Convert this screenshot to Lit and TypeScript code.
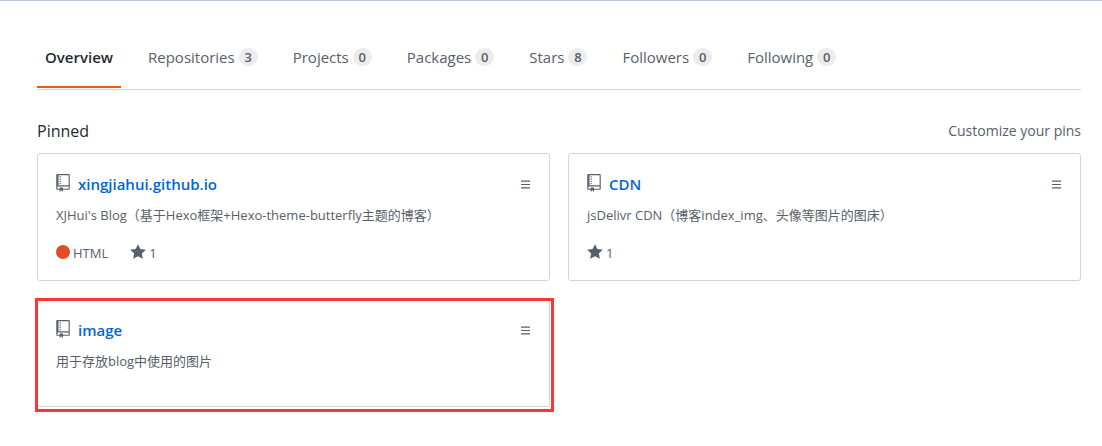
import { LitElement, html, css, svg, nothing } from "lit";
import { customElement, property } from "lit/decorators.js";

interface Tab {
  label: string;
  count?: number;
}

interface Repo {
  name: string;
  description: string;
  language?: string;
  stars?: number;
  highlighted?: boolean;
}

const TABS: Tab[] = [
  { label: "Overview" },
  { label: "Repositories", count: 3 },
  { label: "Projects", count: 0 },
  { label: "Packages", count: 0 },
  { label: "Stars", count: 8 },
  { label: "Followers", count: 0 },
  { label: "Following", count: 0 },
];

const REPOS: Repo[] = [
  {
    name: "xingjiahui.github.io",
    description: "XJHui's Blog（基于Hexo框架+Hexo-theme-butterfly主题的博客）",
    language: "HTML",
    stars: 1,
  },
  { name: "CDN", description: "jsDelivr CDN（博客index_img、头像等图片的图床）", stars: 1 },
  { name: "image", description: "用于存放blog中使用的图片", highlighted: true },
];

const repoPath = svg`<path fill-rule="evenodd" d="M4 9H3V8h1v1zm0-3H3v1h1V6zm0-2H3v1h1V4zm0-2H3v1h1V2zm8-1v12c0 .55-.45 1-1 1H6v2l-1.5-1.5L3 16v-2H1c-.55 0-1-.45-1-1V1c0-.55.45-1 1-1h10c.55 0 1 .45 1 1zm-1 10H1v2h2v-1h3v1h5v-2zm0-10H2v9h9V1z"/>`;
const starPath = svg`<path d="M14 6l-4.9-.64L7 1 4.9 5.36 0 6l3.6 3.26L2.67 14 7 11.67 11.33 14l-.93-4.74L14 6z"/>`;
const grabberPath = svg`<path d="M8 4v1H0V4h8zM0 8h8V7H0v1zm0 3h8v-1H0v1z"/>`;

@customElement("repo-card")
export class RepoCard extends LitElement {
  @property({ attribute: false }) repo!: Repo;

  static styles = css`
    :host {
      display: block;
      position: relative;
    }
    .card {
      box-sizing: border-box;
      height: 100%;
      padding: 18px 18px 17px;
      border: 1px solid #d1d5da;
      border-radius: 3px;
      display: flex;
      flex-direction: column;
      color: #586069;
    }
    .head {
      display: flex;
      align-items: center;
      height: 24px;
    }
    svg {
      display: block;
      fill: currentColor;
    }
    .icon {
      margin-bottom: 2px;
    }
    .name {
      flex: 1;
      margin-left: 8px;
      font-size: 15px;
      line-height: 24px;
      font-weight: 600;
      color: #0366d6;
      text-decoration: none;
    }
    .grab {
      border: 0;
      background: none;
      padding: 2px 1px 0 0;
      color: inherit;
      cursor: move;
    }
    .description {
      margin: 9px 0 18px;
      font-size: 13px;
      line-height: 20px;
    }
    .meta {
      display: flex;
      align-items: center;
      gap: 22px;
      font-size: 13px;
      line-height: 20px;
    }
    .item {
      display: flex;
      align-items: center;
      gap: 3px;
      color: inherit;
      text-decoration: none;
    }
    .dot {
      width: 14px;
      height: 14px;
      margin-bottom: 2px;
      border-radius: 50%;
      background: #e34c26;
    }
    .star {
      margin-bottom: 2px;
    }
    .outline {
      position: absolute;
      inset: -1px -4px -5px -2px;
      border: 3px solid #fd3535;
      pointer-events: none;
    }
  `;

  render() {
    const { name, description, language, stars, highlighted } = this.repo;
    return html`
      <article class="card">
        <div class="head">
          <svg class="icon" width="14" height="18" viewBox="0 0 12 16" aria-hidden="true">${repoPath}</svg>
          <a class="name" href="#${name}">${name}</a>
          <button class="grab" type="button" aria-label="Reorder ${name}">
            <svg width="9" height="18" viewBox="0 0 8 16" aria-hidden="true">${grabberPath}</svg>
          </button>
        </div>
        <p class="description">${description}</p>
        ${language || stars
          ? html`<div class="meta">
              ${language ? html`<span class="item"><span class="dot"></span>${language}</span>` : nothing}
              ${stars
                ? html`<a class="item" href="#stars">
                    <svg class="star" width="16" height="18" viewBox="0 0 14 16" aria-hidden="true">${starPath}</svg>${stars}
                  </a>`
                : nothing}
            </div>`
          : nothing}
      </article>
      ${highlighted ? html`<div class="outline"></div>` : nothing}
    `;
  }
}

@customElement("app-root")
export class AppRoot extends LitElement {
  static styles = css`
    :host {
      display: block;
      border-top: 1px solid #bccbdf;
      padding: 28px 21px 35px 37px;
      background: #fff;
      color: #24292e;
      font-family: "Segoe UI", "Open Sans", "Noto Sans CJK SC", sans-serif;
      font-size: 15px;
      line-height: 24px;
    }
    .tabs {
      display: flex;
      gap: 19px;
      border-bottom: 1px solid #d1d5da;
      margin-bottom: 29px;
    }
    .tab {
      display: flex;
      align-items: center;
      gap: 4px;
      padding: 16px 8px 17px;
      border-bottom: 2px solid transparent;
      margin-bottom: 1px;
      color: #586069;
      text-decoration: none;
      white-space: nowrap;
    }
    .tab.current {
      font-weight: 600;
      color: #24292e;
      border-color: #e36209;
    }
    .count {
      min-width: 19px;
      border-radius: 9px;
      background: #ececed;
      font-size: 13px;
      line-height: 18px;
      font-weight: 600;
      text-align: center;
    }
    .heading {
      display: flex;
      justify-content: space-between;
      align-items: center;
      margin-bottom: 10px;
    }
    h2 {
      margin: 0;
      font-size: 16px;
      line-height: 24px;
      font-weight: 400;
    }
    .customize {
      font-size: 14px;
      color: #586069;
      text-decoration: none;
    }
    .grid {
      display: grid;
      grid-template-columns: 1fr 1fr;
      gap: 18px;
    }
  `;

  render() {
    return html`
      <nav class="tabs" aria-label="User profile">
        ${TABS.map(
          (tab, i) => html`<a class="tab ${i === 0 ? "current" : ""}" href="#${tab.label.toLowerCase()}"
            >${tab.label}${tab.count === undefined ? nothing : html`<span class="count">${tab.count}</span>`}</a
          >`,
        )}
      </nav>
      <div class="heading">
        <h2>Pinned</h2>
        <a class="customize" href="#pins">Customize your pins</a>
      </div>
      <div class="grid">${REPOS.map((repo) => html`<repo-card .repo=${repo}></repo-card>`)}</div>
    `;
  }
}
